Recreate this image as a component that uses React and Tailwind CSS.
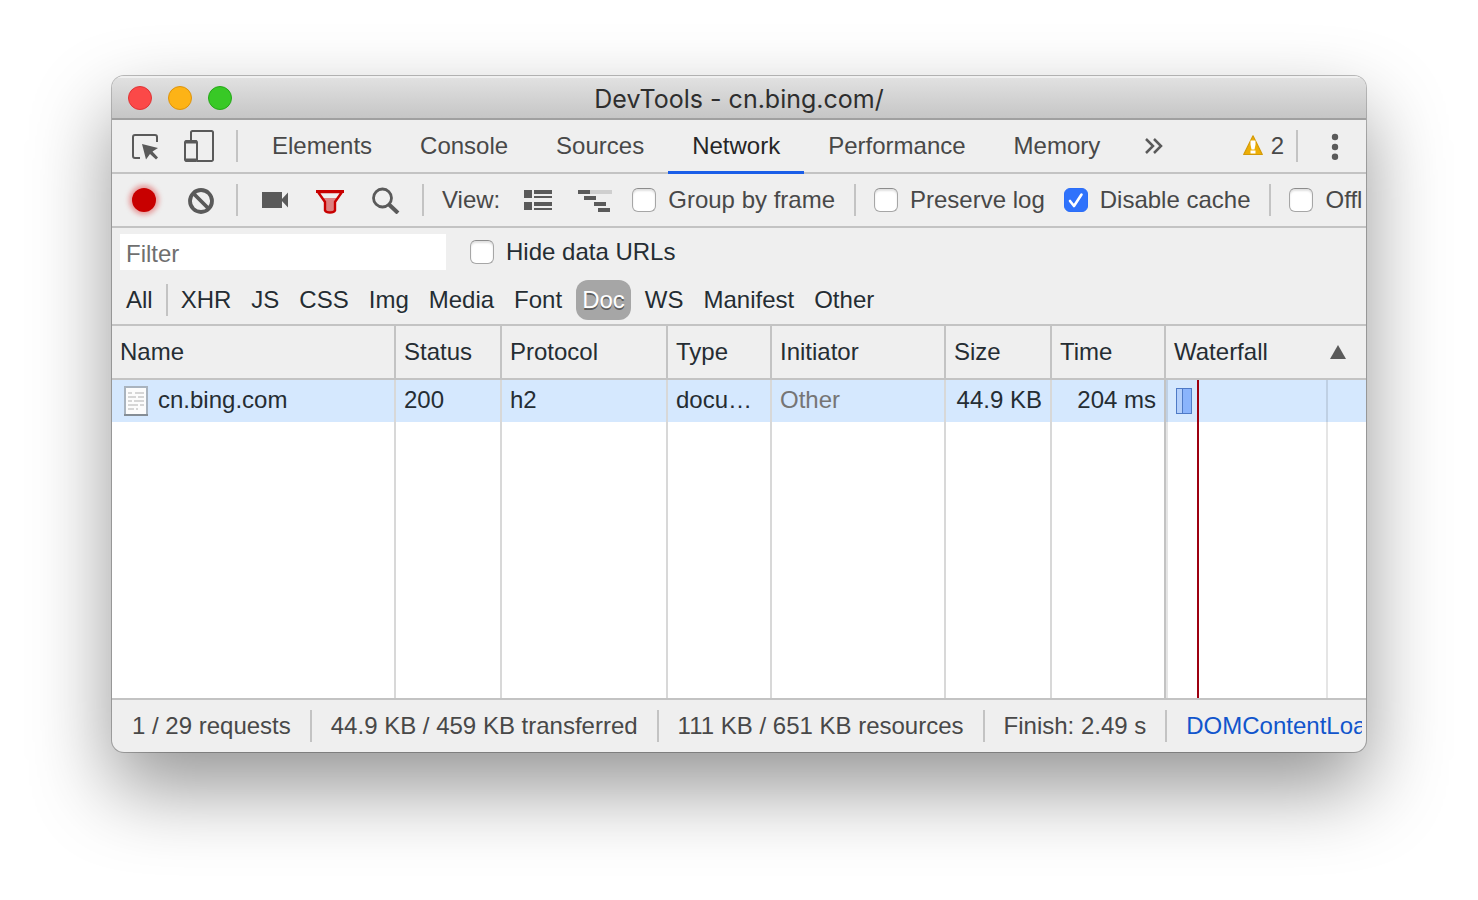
import { useState } from 'react';
import clsx from 'clsx';

const tabs = ['Elements', 'Console', 'Sources', 'Network', 'Performance', 'Memory'];
const types = ['XHR', 'JS', 'CSS', 'Img', 'Media', 'Font', 'Doc', 'WS', 'Manifest', 'Other'];

const columns = [
  { name: 'Name', width: '' },
  { name: 'Status', width: 'w-[106px]' },
  { name: 'Protocol', width: 'w-[166px]' },
  { name: 'Type', width: 'w-[104px]' },
  { name: 'Initiator', width: 'w-[174px]' },
  { name: 'Size', width: 'w-[106px]' },
  { name: 'Time', width: 'w-[114px]' },
];

function Divider({ className }) {
  return <div className={clsx('h-8 w-0.5 shrink-0 bg-[#c3c3c3]', className)} />;
}

function Checkbox({ label, defaultChecked, className }) {
  return (
    <label className={clsx('flex shrink-0 items-center gap-3 whitespace-nowrap', className)}>
      <span className="relative size-6 shrink-0">
        <input
          type="checkbox"
          defaultChecked={defaultChecked}
          className="peer block size-6 appearance-none rounded-md border border-[#a6a6a6] border-t-[#8c8c8c] bg-white shadow-[inset_0_2px_2px_rgba(0,0,0,0.12)] checked:border-[#2b6df8] checked:bg-[#2f72fb] checked:shadow-none"
        />
        <svg viewBox="0 0 24 24" className="pointer-events-none absolute inset-0 hidden size-6 peer-checked:block" fill="none">
          <path d="M6 13l4 5L17.500 6.500" stroke="#fff" strokeWidth="2.600" strokeLinecap="round" strokeLinejoin="round" />
        </svg>
      </span>
      {label}
    </label>
  );
}

function IconButton({ label, className, children }) {
  return (
    <button type="button" aria-label={label} className={clsx('shrink-0 text-[#5a5a5a]', className)}>
      {children}
    </button>
  );
}

function TitleBar() {
  return (
    <header className="relative flex h-11 shrink-0 items-center justify-center border-b-2 border-[#a0a0a0] bg-linear-to-b from-[#e2e2e2] to-[#c6c6c6] pt-0.5 shadow-[inset_0_2px_0_#f0f0f0]">
      <div className="absolute left-4 flex gap-4">
        <button type="button" aria-label="Close" className="size-6 rounded-full border border-[#df3436] bg-[#fb4948]" />
        <button type="button" aria-label="Minimize" className="size-6 rounded-full border border-[#dd930d] bg-[#fdb316]" />
        <button type="button" aria-label="Zoom" className="size-6 rounded-full border border-[#26a719] bg-[#38c926]" />
      </div>
      <h1 className="pt-0.5 font-[Inter,sans-serif] text-[25px] leading-8 text-[#2e2e2e]">DevTools - cn.bing.com/</h1>
    </header>
  );
}

function TabBar() {
  const [active, setActive] = useState('Network');

  return (
    <nav className="flex h-[54px] shrink-0 items-center border-b-2 border-[#c3c3c3] pl-5">
      <IconButton label="Inspect element">
        <svg width="28" height="32" viewBox="0 0 28 32" fill="none">
          <path d="M8 28H3a2 2 0 0 1-2-2V7a2 2 0 0 1 2-2h20a2 2 0 0 1 2 2v5" stroke="currentColor" strokeWidth="2" />
          <path d="M10 14l16 4-5.500 3.500 5.500 6-2 2-6-5.500-4 5.500z" fill="currentColor" />
        </svg>
      </IconButton>
      <IconButton label="Toggle device toolbar" className="ml-6">
        <svg width="30" height="32" viewBox="0 0 30 32" fill="none" stroke="currentColor" strokeWidth="2">
          <path d="M7 10V2.500A1.500 1.500 0 0 1 8.500 1h19A1.500 1.500 0 0 1 29 2.500V29.500A1.500 1.500 0 0 1 27.500 31H13" />
          <path d="M1 12.500A1.500 1.500 0 0 1 2.500 11h9.500a1.500 1.500 0 0 1 1 1.500V29.500a1.500 1.500 0 0 1-1.500 1.500h-9A1.500 1.500 0 0 1 1 29.500z" />
          <path d="M1 12h12M1 30h12" strokeWidth="3" />
        </svg>
      </IconButton>
      <Divider className="mr-2.5 ml-[22px]" />
      {tabs.map((tab) => (
        <button
          key={tab}
          type="button"
          onClick={() => setActive(tab)}
          className={clsx(
            '-mb-0.5 h-[54px] border-b-[3px] px-6',
            tab === active ? 'border-[#1a5ee8] text-[#262626]' : 'border-transparent'
          )}
        >
          {tab}
        </button>
      ))}
      <IconButton label="More tabs" className="ml-5">
        <svg width="20" height="20" viewBox="0 0 20 20" fill="none" stroke="currentColor" strokeWidth="2.500">
          <path d="M2 3l7 7-7 7M10 3l7 7-7 7" />
        </svg>
      </IconButton>
      <button type="button" className="ml-auto flex items-center gap-2">
        <svg width="20" height="22" viewBox="0 0 20 22">
          <path d="M10 .8L19.300 19.500H.7z" fill="#edae05" stroke="#d39a08" strokeWidth="1.200" strokeLinejoin="round" />
          <path d="M7.500 5.500h5v4l-1 5h-3l-1-5zM7.500 15.500h5v3h-5z" fill="#fff" />
        </svg>
        2
      </button>
      <Divider className="ml-3" />
      <IconButton label="Customize" className="mr-[18px] ml-7">
        <svg width="22" height="28" viewBox="0 0 22 28" fill="currentColor">
          <circle cx="9" cy="5" r="3.200" />
          <circle cx="9" cy="15" r="3.200" />
          <circle cx="9" cy="24.800" r="3.200" />
        </svg>
      </IconButton>
    </nav>
  );
}

function Toolbar() {
  return (
    <div className="h-[54px] shrink-0 border-b-2 border-[#c3c3c3] pr-1">
      <div className="flex h-full items-center overflow-hidden pl-5">
        <IconButton label="Stop recording">
          <span className="block size-6 rounded-full bg-[#c80000] shadow-[0_0_5px_3px_rgba(214,0,0,0.35)]" />
        </IconButton>
        <IconButton label="Clear" className="ml-8">
          <svg width="26" height="28" viewBox="0 0 26 28" fill="none" stroke="currentColor" strokeWidth="3.800">
            <circle cx="13" cy="15" r="11" />
            <path d="M5.500 7.500l15 15" />
          </svg>
        </IconButton>
        <Divider className="ml-[22px]" />
        <IconButton label="Capture screenshots" className="ml-6">
          <svg width="26" height="16" viewBox="0 0 26 16" fill="currentColor">
            <path d="M0 0h20v16H0zM26 .5v15l-7-7.500z" />
          </svg>
        </IconButton>
        <IconButton label="Filter" className="ml-7">
          <svg width="28" height="28" viewBox="0 0 28 28">
            <path d="M6 12h16l-4 5v8q-4 2-8 0v-8z" fill="#dd8080" />
            <path d="M2 6h24L19 16v8.500q-1 2-5 2t-5-2V16z" fill="none" stroke="#c80000" strokeWidth="2.400" />
            <path d="M0 5.500h28" stroke="#c80000" strokeWidth="3" />
          </svg>
        </IconButton>
        <IconButton label="Search" className="ml-7">
          <svg width="28" height="28" viewBox="0 0 28 28" fill="none" stroke="currentColor">
            <circle cx="10.500" cy="12" r="9" strokeWidth="2.800" />
            <path d="M17 18.500l9 8.500" strokeWidth="4" />
          </svg>
        </IconButton>
        <Divider className="ml-[22px]" />
        <span className="ml-[18px]">View:</span>
        <IconButton label="Use large request rows" className="ml-6">
          <svg width="28" height="20" viewBox="0 0 28 20" fill="currentColor">
            <path d="M0 0h8v8H0zM10 0h18v4H10zM10 6h18v2H10zM0 12h8v8H0zM10 12h18v4H10zM10 18h18v2H10z" />
          </svg>
        </IconButton>
        <IconButton label="Show overview" className="ml-[26px]">
          <svg width="34" height="24" viewBox="0 0 34 24" fill="currentColor">
            <path d="M12 2h22v4H12z" fill="#cfcfcf" />
            <path d="M0 2h12v4H0zM6 8h12v4H6zM16 14h12v4H16zM20 20h12v4H20z" />
          </svg>
        </IconButton>
        <Checkbox label="Group by frame" className="ml-5" />
        <Divider className="ml-[19px]" />
        <Checkbox label="Preserve log" className="ml-[18px]" />
        <Checkbox label="Disable cache" defaultChecked className="ml-[19px]" />
        <Divider className="ml-[19px]" />
        <Checkbox label="Offline" className="ml-[18px]" />
      </div>
    </div>
  );
}

function FilterBar() {
  const [type, setType] = useState('Doc');

  const typeButton = (name) => (
    <button
      key={name}
      type="button"
      onClick={() => setType(name)}
      className={clsx(
        'h-10 rounded-xl px-1.5',
        type === name
          ? 'bg-[#a6a6a6] text-white [text-shadow:0_2px_0_rgba(0,0,0,0.45)]'
          : '[text-shadow:0_2px_0_rgba(255,255,255,0.5)]'
      )}
    >
      {name}
    </button>
  );

  return (
    <div className="shrink-0 border-b-2 border-[#c3c3c3] pt-1.5 pb-1 pl-2 text-[#252d33]">
      <div className="flex h-9 items-center">
        <input
          type="text"
          aria-label="Filter"
          placeholder="Filter"
          className="h-9 w-[326px] bg-white px-1.5 pt-1 outline-none placeholder:text-[#6f6f6f]"
        />
        <Checkbox label="Hide data URLs" className="ml-6" />
      </div>
      <div className="mt-2.5 flex h-10 items-center gap-[7px]">
        {typeButton('All')}
        <Divider />
        <div className="flex gap-2">{types.map(typeButton)}</div>
      </div>
    </div>
  );
}

// vertical time marks, repeated in each row so they run the full height
function WaterfallLines() {
  return (
    <>
      <span className="absolute inset-y-0 left-0 w-0.5 bg-black/10" />
      <span className="absolute inset-y-0 left-[31px] w-0.5 bg-[#9d0010]" />
      <span className="absolute inset-y-0 right-[38px] w-0.5 bg-black/10" />
    </>
  );
}

function RequestTable() {
  const cell = 'truncate border-r-2 border-[#d8d8d8] px-2 pb-0.5';

  return (
    <table className="h-full w-full table-fixed border-separate border-spacing-0 text-left text-[#252d33]">
      <thead>
        <tr className="h-[54px] bg-[#efefef]">
          {columns.map((col) => (
            <th key={col.name} className={clsx('border-r-2 border-b-2 border-[#c3c3c3] px-2 font-normal', col.width)}>
              {col.name}
            </th>
          ))}
          <th className="w-[200px] border-b-2 border-[#c3c3c3] pr-5 pl-2 font-normal">
            <div className="flex items-center justify-between">
              Waterfall
              <svg width="16" height="14" viewBox="0 0 16 14" fill="#5a5a5a">
                <path d="M8 0l8 14H0z" />
              </svg>
            </div>
          </th>
        </tr>
      </thead>
      <tbody>
        <tr className="h-[42px] bg-[#d5e8fe]">
          <td className="truncate border-r-2 border-[#d8d8d8] pb-0.5 pl-3">
            <div className="flex items-center gap-2.5">
              <svg width="24" height="30" viewBox="0 0 24 30" className="mt-0.5 shrink-0">
                <path d="M1 1h22v28H1z" fill="#fcfcfc" stroke="#a9b3be" strokeWidth="2" />
                <path d="M0 29h24" stroke="#858d95" strokeWidth="2" />
                <path d="M4 7h4M11 7h9M4 11h8M14 11h6M4 15h4M10 15h10M4 19h10M16 19h4M4 23h6M12 23h2" stroke="#d6d6d6" strokeWidth="2" />
              </svg>
              cn.bing.com
            </div>
          </td>
          <td className={cell}>200</td>
          <td className={cell}>h2</td>
          <td className={cell}>document</td>
          <td className={clsx(cell, 'text-[#757575]')}>Other</td>
          <td className={clsx(cell, 'text-right')}>44.9 KB</td>
          <td className="truncate border-r-2 border-[#c3c3c3] px-2 pb-0.5 text-right">204 ms</td>
          <td className="relative">
            <WaterfallLines />
            <div className="absolute top-2 left-2.5 flex h-[26px] w-4 border border-[#4f7ac6] bg-[#8ab4fc]">
              <div className="w-1.5 border-r border-[#4f7ac6] bg-[#b3cffb]" />
            </div>
          </td>
        </tr>
        <tr>
          {columns.map((col) => (
            <td
              key={col.name}
              className={clsx('border-r-2', col.name === 'Time' ? 'border-[#c3c3c3]' : 'border-[#d8d8d8]')}
            />
          ))}
          <td className="relative">
            <WaterfallLines />
          </td>
        </tr>
      </tbody>
    </table>
  );
}

function StatusBar() {
  return (
    <footer className="h-[54px] shrink-0 border-t-2 border-[#c3c3c3] pr-1">
      <div className="flex h-full items-center gap-[19px] overflow-hidden pl-5 whitespace-nowrap">
        <span>1 / 29 requests</span>
        <Divider />
        <span>44.9 KB / 459 KB transferred</span>
        <Divider />
        <span>111 KB / 651 KB resources</span>
        <Divider />
        <span>Finish: 2.49 s</span>
        <Divider />
        <span className="text-[#1155cc]">DOMContentLoaded: 447 ms</span>
      </div>
    </footer>
  );
}

export default function App() {
  return (
    <div className="flex h-screen flex-col bg-white px-28 pt-[76px] pb-[148px] font-['Liberation_Sans',Arial,sans-serif] text-2xl leading-7 text-[#484848]">
      <div className="flex min-h-0 flex-1 flex-col overflow-hidden rounded-xl bg-[#efefef] shadow-[0_0_0_1px_rgba(0,0,0,0.25),0_36px_80px_rgba(0,0,0,0.42)]">
        <TitleBar />
        <TabBar />
        <Toolbar />
        <FilterBar />
        <main className="min-h-0 flex-1 bg-white">
          <RequestTable />
        </main>
        <StatusBar />
      </div>
    </div>
  );
}
